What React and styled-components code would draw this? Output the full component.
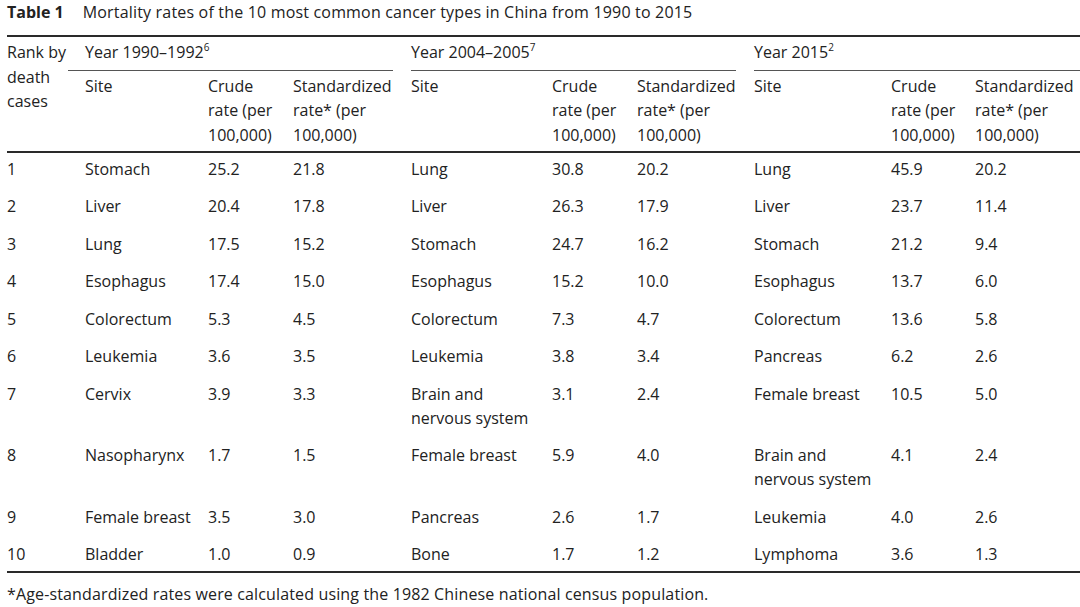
import React from 'react';
import styled, {createGlobalStyle} from 'styled-components';

const Global = createGlobalStyle`
    html, body {
        margin: 0;
        padding: 0;
        background: #fff;
    }
    body {
        font-family: "Open Sans", "Noto Sans", sans-serif;
        font-size: 16px;
        color: #222;
    }
`;

const Page = styled.div`
    width: 1080px;
    height: 607px;
    padding-left: 7px;
    box-sizing: border-box;
    overflow: hidden;
`;

const Caption = styled.div`
    line-height: 24px;
    white-space: nowrap;
    letter-spacing: 0.18px;
    b {
        font-weight: 700;
        letter-spacing: 0;
        margin-right: 19px;
    }
`;

const Table = styled.table`
    margin-top: 11px;
    width: 1073px;
    table-layout: fixed;
    border-collapse: collapse;
    border-top: 2px solid #2a2a2a;
    border-bottom: 2px solid #2a2a2a;
    line-height: 24.5px;
    thead {
        border-bottom: 2px solid #2a2a2a;
    }
    tbody {
        line-height: 24px;
    }
    tbody tr:first-child td {padding-top: 4px;}
    tbody tr:nth-child(even) td {padding-bottom: 8px;}
    tbody tr:last-child td {padding-bottom: 5px;}
`;

const Th = styled.th`
    font-weight: 400;
    text-align: left;
    vertical-align: top;
    padding: ${p => p.$top ? '3px 0 0' : '3px 0 4px'};
    padding-left: ${p => p.$pl || 0}px;
    white-space: nowrap;
`;

const GroupTh = styled.th`
    font-weight: 400;
    text-align: left;
    padding: 3px 0 0;
`;

const GroupLabel = styled.div`
    padding-left: ${p => p.$pl || 0}px;
    padding-bottom: 5px;
    margin-right: ${p => p.$mr || 0}px;
    border-bottom: 1px solid #555;
    white-space: nowrap;
    sup {
        font-size: 10px;
        line-height: 0;
        vertical-align: 7px;
    }
`;

const Td = styled.td`
    vertical-align: top;
    padding: 6px 0 7px;
    padding-left: ${p => p.$pl || 0}px;
`;

const Note = styled.div`
    margin-top: 9px;
    line-height: 24px;
    letter-spacing: 0.14px;
    white-space: nowrap;
`;

const cols = [61, 140, 85, 118, 141, 85, 117, 137, 84, 105];

const rows = [
    ['1', 'Stomach', '25.2', '21.8', 'Lung', '30.8', '20.2', 'Lung', '45.9', '20.2'],
    ['2', 'Liver', '20.4', '17.8', 'Liver', '26.3', '17.9', 'Liver', '23.7', '11.4'],
    ['3', 'Lung', '17.5', '15.2', 'Stomach', '24.7', '16.2', 'Stomach', '21.2', '9.4'],
    ['4', 'Esophagus', '17.4', '15.0', 'Esophagus', '15.2', '10.0', 'Esophagus', '13.7', '6.0'],
    ['5', 'Colorectum', '5.3', '4.5', 'Colorectum', '7.3', '4.7', 'Colorectum', '13.6', '5.8'],
    ['6', 'Leukemia', '3.6', '3.5', 'Leukemia', '3.8', '3.4', 'Pancreas', '6.2', '2.6'],
    ['7', 'Cervix', '3.9', '3.3', 'Brain and\nnervous system', '3.1', '2.4', 'Female breast', '10.5', '5.0'],
    ['8', 'Nasopharynx', '1.7', '1.5', 'Female breast', '5.9', '4.0', 'Brain and\nnervous system', '4.1', '2.4'],
    ['9', 'Female breast', '3.5', '3.0', 'Pancreas', '2.6', '1.7', 'Leukemia', '4.0', '2.6'],
    ['10', 'Bladder', '1.0', '0.9', 'Bone', '1.7', '1.2', 'Lymphoma', '3.6', '1.3'],
];

const withBreaks = (text) => text.split('\n').map((t, i) => (
    <React.Fragment key={i}>{i > 0 && <br/>}{t}</React.Fragment>
));

const SubHeads = ({pl}) => (
    <>
        <Th $pl={pl}>Site</Th>
        <Th>Crude<br/>rate (per<br/>100,000)</Th>
        <Th>Standardized<br/>rate* (per<br/>100,000)</Th>
    </>
);

const App = () => {
    return (
        <Page>
            <Global/>
            <Caption>
                <b>Table 1</b>
                Mortality rates of the 10 most common cancer types in China from 1990 to 2015
            </Caption>
            <Table>
                <colgroup>
                    {cols.map((w, i) => <col key={i} style={{width: w}}/>)}
                </colgroup>
                <thead>
                    <tr>
                        <Th rowSpan={2} $top>Rank by<br/>death<br/>cases</Th>
                        <GroupTh colSpan={3}>
                            <GroupLabel $pl={17} $mr={18}>Year 1990–1992<sup>6</sup></GroupLabel>
                        </GroupTh>
                        <GroupTh colSpan={3}>
                            <GroupLabel $mr={18}>Year 2004–2005<sup>7</sup></GroupLabel>
                        </GroupTh>
                        <GroupTh colSpan={3}>
                            <GroupLabel>Year 2015<sup>2</sup></GroupLabel>
                        </GroupTh>
                    </tr>
                    <tr>
                        <SubHeads pl={17}/>
                        <SubHeads/>
                        <SubHeads/>
                    </tr>
                </thead>
                <tbody>
                    {rows.map(r => (
                        <tr key={r[0]}>
                            {r.map((c, i) => (
                                <Td key={i} $pl={i === 1 ? 17 : 0}>{withBreaks(c)}</Td>
                            ))}
                        </tr>
                    ))}
                </tbody>
            </Table>
            <Note>*Age-standardized rates were calculated using the 1982 Chinese national census population.</Note>
        </Page>
    );
};

export default App;
